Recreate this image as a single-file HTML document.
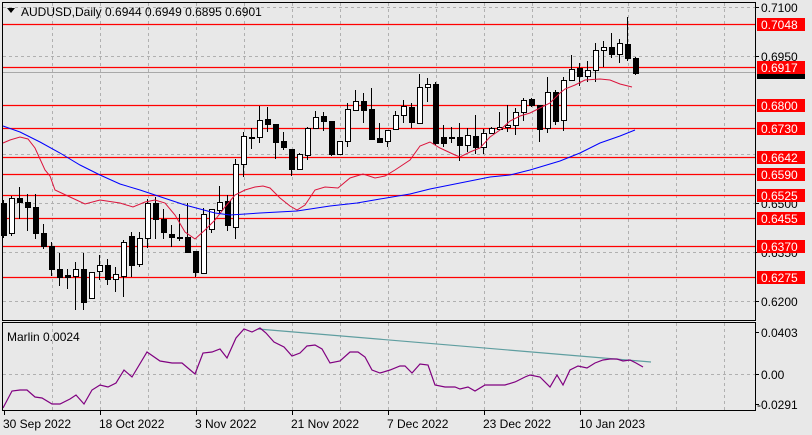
<!DOCTYPE html>
<html><head><meta charset="utf-8"><style>
html,body{margin:0;padding:0;background:#e8e8e8;}
svg{display:block;font-family:Tahoma,"Liberation Sans","DejaVu Sans",sans-serif;}
</style></head><body>
<svg id="s" width="812" height="435" viewBox="0 0 812 435" xmlns="http://www.w3.org/2000/svg">
<rect width="812" height="435" fill="#e8e8e8"/>
<g id="grid" stroke="#b0b0b0" stroke-dasharray="3,3" stroke-width="1"></g>
<g id="hl"></g>
<g id="cand"></g>
<polyline id="red" fill="none" stroke="#dc143c" stroke-width="1"/>
<polyline id="blue" fill="none" stroke="#0000ff" stroke-width="1"/>
<line x1="258" y1="329" x2="651" y2="362" stroke="#5f9ea0" stroke-width="1.2"/>
<polyline id="mar" fill="none" stroke="#800080" stroke-width="1.2"/>
<rect x="2.5" y="2.5" width="753" height="318" fill="none" stroke="#000"/>
<rect x="2.5" y="322.5" width="753" height="88" fill="none" stroke="#000"/>
<g id="lab" font-size="12"></g>
<polygon points="7,8 15,8 11,13" fill="#000"/>
<text x="21" y="16" font-size="12" fill="#000">AUDUSD,Daily  0.6944 0.6949 0.6895 0.6901</text>
<text x="7" y="341" font-size="12" fill="#000">Marlin 0.0024</text>
</svg>
<script>
var NS="http://www.w3.org/2000/svg";
function el(p,t,a,txt){var e=document.createElementNS(NS,t);for(var k in a)e.setAttribute(k,a[k]);if(txt)e.textContent=txt;document.getElementById(p).appendChild(e);return e;}
for(var x=52;x<756;x+=48){el('grid','line',{x1:x+.5,y1:3,x2:x+.5,y2:320});el('grid','line',{x1:x+.5,y1:323,x2:x+.5,y2:410});}
[7,56,105,154,203,252,301].forEach(function(y){el('grid','line',{x1:3,y1:y+.5,x2:755,y2:y+.5});});
el('grid','line',{x1:3,y1:374.5,x2:755,y2:374.5});
el('hl','line',{x1:3,y1:72.5,x2:755,y2:72.5,stroke:'#a8a8a8'});
var lv=[[24,'0.7048'],[67,'0.6917'],[105,'0.6800'],[128,'0.6730'],[157,'0.6642'],[174,'0.6590'],[195,'0.6525'],[218,'0.6455'],[246,'0.6370'],[277,'0.6275']];
lv.forEach(function(l){el('hl','line',{x1:3,y1:l[0]+.5,x2:755,y2:l[0]+.5,stroke:'#ff0000','stroke-width':1.3});});
var c=[[200,238,203,235,0],[196,236,198,233,1],[187,219,198,202,0],[194,231,202,207,0],[194,239,207,233,0],[224,249,233,246,0],[242,276,246,269,0],[253,286,269,277,0],[269,289,275,277,0],[262,310,269,276,1],[253,310,269,302,0],[272,299,272,298,1],[255,280,265,271,1],[259,285,265,279,0],[267,292,274,279,1],[240,297,242,276,1],[232,277,236,265,0],[232,267,238,264,1],[199,248,203,238,1],[197,239,203,219,0],[209,239,219,232,0],[225,247,234,237,0],[214,241,237,238,0],[203,253,237,252,0],[251,277,251,272,0],[208,273,214,273,1],[209,233,209,229,1],[186,213,202,210,1],[195,231,201,225,0],[159,239,164,227,1],[132,177,136,164,1],[128,149,137,138,1],[106,143,120,137,1],[107,132,119,124,0],[124,159,124,142,0],[132,150,141,147,0],[149,176,149,169,0],[153,170,154,169,1],[127,160,128,155,1],[111,129,117,128,1],[112,131,116,121,0],[121,156,121,154,0],[141,155,141,154,1],[103,147,109,141,1],[90,110,101,110,1],[93,123,101,110,0],[88,139,109,139,0],[123,143,138,142,0],[130,147,130,141,1],[111,130,115,129,1],[100,123,106,115,1],[103,128,107,122,0],[74,123,87,123,1],[78,102,84,87,1],[82,145,84,143,0],[125,147,137,143,0],[127,143,137,138,0],[123,161,137,145,0],[128,152,135,145,1],[115,154,136,147,0],[129,154,133,147,1],[127,133,128,133,1],[112,130,127,129,1],[105,132,125,127,1],[108,135,112,125,1],[98,121,100,112,1],[98,107,99,105,0],[105,142,105,129,0],[77,133,92,128,1],[90,125,92,121,0],[77,131,80,120,1],[55,81,69,80,1],[63,86,68,76,0],[61,82,70,76,1],[43,82,50,70,1],[41,67,47,50,1],[33,58,47,54,0],[39,63,43,54,1],[17,61,44,58,0],[57,75,58,73,0]];
c.forEach(function(d,i){var x=3+8*i;
el('cand','line',{x1:x+.5,y1:d[0],x2:x+.5,y2:d[1],stroke:'#000'});
var h=Math.max(1,d[3]-d[2]);
el('cand','rect',{x:x-2+.5,y:d[2]+.5,width:5,height:h,fill:d[4]?'#fff':'#000',stroke:'#000'});});
document.getElementById('red').setAttribute('points','3,143 10,140 20,137 28,139 35,148 45,170 50,176 55,190 70,197 85,204 100,200 120,203 133,207 145,202 155,200 165,203 175,215 185,232 195,239 205,230 215,220 225,207 235,195 245,190 255,187 263,186 270,188 280,198 290,206 297,210 305,205 315,190 325,187 338,188 350,178 363,174 375,178 385,176 395,170 410,160 420,146 430,142 440,148 455,155 460,157 470,152 480,148 490,137 500,130 510,121 520,116 530,113 540,108 550,103 560,93 565,89 575,85 585,80 600,79 610,80 620,84 632,87');
document.getElementById('blue').setAttribute('points','3,126 20,132 40,142 60,153 80,165 100,175 120,184 140,190 155,195 170,200 185,205 200,209 215,213 230,215 260,213 297,211 330,206 357,203 380,199 410,194 430,189 450,185 470,181 490,177 510,175 530,170 560,161 580,153 600,143 620,136 635,130');
document.getElementById('mar').setAttribute('points','3,408 12,391 20,390 27,390 35,397 42,398 52,404 60,404 70,399 76,395 84,404 92,390 100,385 108,387 116,383 124,370 132,377 147,352 160,361 172,363 182,363 195,374 203,353 212,352 220,349 227,358 236,338 244,329 252,332 260,328 266,333 274,342 284,347 292,356 300,353 307,346 315,345 322,349 330,363 340,361 350,352 358,352 365,357 372,370 380,373 390,370 400,366 405,366 412,373 420,364 428,365 435,385 445,387 455,387 460,389 468,387 475,391 485,385 495,385 505,385 515,382 525,377 530,375 540,377 550,387 557,375 563,385 570,370 578,366 587,368 595,363 603,360 610,359 617,359 623,361 630,360 636,363 643,367');
[[7,'0.7100'],[56,'0.6950'],[203,'0.6500'],[252,'0.6350'],[301,'0.6200'],[332,'0.0403'],[374,'0.00'],[404,'-0.0291']].forEach(function(a){
el('lab','line',{x1:755,y1:a[0]+.5,x2:759,y2:a[0]+.5,stroke:'#000'});
el('lab','text',{x:a[1][0]=='-'?757:761,y:a[0]+5,fill:'#000'},a[1]);});
el('lab','rect',{x:757,y:70,width:48,height:9,fill:'#000'});
lv.forEach(function(l){el('lab','rect',{x:757,y:l[0]-6,width:48,height:13,fill:'#ff0000'});
el('lab','text',{x:761,y:l[0]+5,fill:'#fff'},l[1]);});
[[4,'30 Sep 2022'],[100,'18 Oct 2022'],[196,'3 Nov 2022'],[292,'21 Nov 2022'],[388,'7 Dec 2022'],[484,'23 Dec 2022'],[580,'10 Jan 2023']].forEach(function(d){
el('lab','line',{x1:d[0]+.5,y1:411,x2:d[0]+.5,y2:415,stroke:'#000'});
el('lab','text',{x:d[0]-1,y:428,fill:'#000'},d[1]);});
</script>
</body></html>
